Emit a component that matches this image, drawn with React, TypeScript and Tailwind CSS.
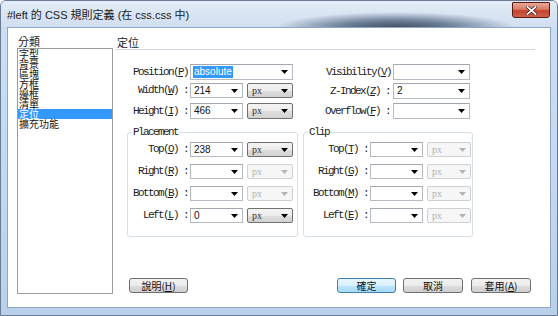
import React from "react";

const LBL =
  "font-['Liberation_Mono','Noto_Sans_CJK_TC',monospace] text-[11px] tracking-[-1.6px] text-[#1e1e1e] leading-none whitespace-nowrap";
const VAL = "font-['Liberation_Sans',sans-serif] text-[10px] leading-none text-[#111]";
const CJK = "font-['Noto_Sans_CJK_TC','Noto_Sans_CJK_SC',sans-serif]";

function Arrow({ disabled }: { disabled?: boolean }) {
  return (
    <svg width="7" height="4" viewBox="0 0 7 4" className="shrink-0">
      <path d="M0 0H7L3.5 4Z" fill={disabled ? "#b4b4b4" : "#000"} />
    </svg>
  );
}

function Combo({ className, value, sel }: { className: string; value?: string; sel?: boolean }) {
  return (
    <div
      className={
        "flex items-center justify-between border border-[#b5b9c0] border-t-[#a3a8b0] bg-white pl-[2px] pr-[4px] " +
        className
      }
    >
      <span
        className={
          sel
            ? VAL + " bg-[#3399ff] text-white px-[1px] py-[1px]"
            : VAL + " pl-[1px]"
        }
      >
        {value}
      </span>
      <Arrow />
    </div>
  );
}

function Unit({ className, disabled }: { className: string; disabled?: boolean }) {
  return (
    <div
      className={
        (disabled
          ? "border-[#d0d0d0] bg-[#f6f6f6] text-[#b0b0b0] "
          : "border-[#707070] bg-[linear-gradient(to_bottom,#f4f4f4_0%,#ececec_50%,#dedede_51%,#d2d2d2_100%)] text-[#333] ") +
        "flex items-center justify-between border rounded-[2px] pl-[4px] pr-[4px] " +
        className
      }
    >
      <span className="font-['Liberation_Serif',serif] text-[10px] leading-none">px</span>
      <Arrow disabled={disabled} />
    </div>
  );
}

function Lbl({ children, className }: { children: React.ReactNode; className: string }) {
  return <div className={LBL + " text-right " + className}>{children}</div>;
}

function Btn({ children, className, def }: { children: React.ReactNode; className: string; def?: boolean }) {
  return (
    <div
      className={
        (def
          ? "border-[#3c7fb1] bg-[linear-gradient(to_bottom,#eaf6fd_0%,#d9f0fc_50%,#bee6fd_51%,#a7d9f5_100%)] "
          : "border-[#707070] bg-[linear-gradient(to_bottom,#f2f2f2_0%,#ebebeb_50%,#dddddd_51%,#cfcfcf_100%)] ") +
        "flex items-center justify-center border rounded-[3px] h-[15px] text-[10px] leading-none text-[#111] " +
        CJK +
        " " +
        className
      }
    >
      {children}
    </div>
  );
}

const U = ({ c }: { c: string }) => <u className="underline-offset-[1px]">{c}</u>;

export default function App() {
  const items = ["字型", "背景", "區塊", "方框", "邊框", "清單", "定位", "擴充功能"];
  return (
    <div className="w-[558px] h-[316px] bg-white">
      <div className="w-[558px] h-[316px] flex flex-col rounded-t-[6px] border border-[#6a7c93] bg-[linear-gradient(to_bottom,#cddff2_0%,#c3d8ee_60%,#b9d0ea_100%)] overflow-hidden">
        {/* title bar */}
        <div className="h-[26px] flex items-start justify-between bg-[image:radial-gradient(ellipse_120px_16px_at_395px_27px,#3e4b5b_0%,#6b7e95_45%,rgba(160,185,215,0)_100%),linear-gradient(to_bottom,#e3ecf7,#d0def0)]">
          <div className={"pl-[6px] pt-[9px] text-[11px] leading-none text-[#1a1a1a] font-['Liberation_Sans','Noto_Sans_CJK_TC',sans-serif]"}>
            #left 的 CSS 規則定義 (在 css.css 中)
          </div>
          <div className="mt-[1px] mr-[7px] w-[38px] h-[16px] rounded-b-[3px] rounded-t-[1px] border border-[#5b1a10] bg-[linear-gradient(to_bottom,#e9a99a_0%,#d77a66_45%,#c2442d_55%,#d2614a_100%)] flex items-center justify-center">
            <svg width="11" height="9" viewBox="0 0 11 9">
              <path d="M1.5 1L9.5 8M9.5 1L1.5 8" stroke="#3a120b" strokeWidth="3.2" strokeLinecap="square" />
              <path d="M1.5 1L9.5 8M9.5 1L1.5 8" stroke="#fff" strokeWidth="1.8" strokeLinecap="square" />
            </svg>
          </div>
        </div>

        {/* client */}
        <div className="mx-[6px] h-[281px] border border-[#8ea6c2] bg-white flex">
          {/* left column */}
          <div className="pl-[9px] pt-[7px] flex flex-col">
            <div className={"pl-[1px] h-[13px] text-[11px] leading-[13px] text-[#1a1a1a] " + CJK}>分類</div>
            <div className="w-[96px] h-[246px] border border-[#9c9c9c] bg-white">
              {items.map((t) => (
                <div
                  key={t}
                  className={
                    "h-[10px] leading-[10px] text-[10px] pl-[1px] " +
                    CJK +
                    (t === "定位" ? " bg-[#3399ff] text-white" : " text-[#111]")
                  }
                >
                  {t}
                </div>
              ))}
            </div>
          </div>

          {/* right column */}
          <div className="pl-[2px] pt-[7px] flex flex-col">
            <div className={"pl-[2px] h-[14px] text-[11px] leading-[14px] text-[#1a1a1a] " + CJK}>定位</div>
            <div className="w-[420px] h-[2px] border-t border-[#d2d8e0] border-b border-b-white" />

            {/* top rows */}
            <div className="mt-[13px] flex">
              <div className="flex flex-col">
                <div className="flex items-center h-[16px]">
                  <Lbl className="w-[73px]">
                    Position(<U c="P" />)
                  </Lbl>
                  <Combo className="ml-[2px] w-[103px] h-[16px]" value="absolute" sel />
                </div>
                <div className="mt-[3px] flex items-center h-[15px]">
                  <Lbl className="w-[73px]">
                    Width(<U c="W" />) :
                  </Lbl>
                  <Combo className="ml-[2px] w-[53px] h-[15px]" value="214" />
                  <Unit className="ml-[4px] w-[46px] h-[15px]" />
                </div>
                <div className="mt-[5px] flex items-center h-[16px]">
                  <Lbl className="w-[73px]">
                    Height(<U c="I" />) :
                  </Lbl>
                  <Combo className="ml-[2px] w-[53px] h-[16px]" value="466" />
                  <Unit className="ml-[4px] w-[46px] h-[16px]" />
                </div>
              </div>
              <div className="flex flex-col">
                <div className="flex items-center h-[16px]">
                  <Lbl className="w-[98px]">
                    Visibility(<U c="V" />)
                  </Lbl>
                  <Combo className="ml-[2px] w-[77px] h-[16px]" />
                </div>
                <div className="mt-[3px] flex items-center h-[16px]">
                  <Lbl className="w-[97px]">
                    Z-Index(<U c="Z" />) :
                  </Lbl>
                  <Combo className="ml-[3px] w-[77px] h-[16px]" value="2" />
                </div>
                <div className="mt-[4px] flex items-center h-[16px]">
                  <Lbl className="w-[97px]">
                    Overflow(<U c="F" />) :
                  </Lbl>
                  <Combo className="ml-[3px] w-[77px] h-[16px]" />
                </div>
              </div>
            </div>

            {/* groups */}
            <div className="mt-[8px] ml-[12px] flex gap-[5px]">
              <fieldset className="w-[171px] h-[110px] border border-[#d5dfe5] rounded-[3px]">
                <legend className={LBL + " ml-[4px] px-[1px] leading-[12px]"}>Placement</legend>
                <div className="mt-[4px] flex flex-col gap-[7px]">
                  {[
                    ["Top", "O", "238", false],
                    ["Right", "R", "", true],
                    ["Bottom", "B", "", true],
                    ["Left", "L", "0", false],
                  ].map(([n, k, v, d]) => (
                    <div key={n as string} className="flex items-center h-[15px]">
                      <Lbl className="w-[60px]">
                        {n as string}(<U c={k as string} />) :
                      </Lbl>
                      <Combo className="ml-[2px] w-[53px] h-[15px]" value={v as string} />
                      <Unit className="ml-[4px] w-[46px] h-[15px]" disabled={d as boolean} />
                    </div>
                  ))}
                </div>
              </fieldset>
              <fieldset className="w-[170px] h-[110px] border border-[#d5dfe5] rounded-[3px]">
                <legend className={LBL + " ml-[4px] px-[1px] leading-[12px]"}>Clip</legend>
                <div className="mt-[4px] flex flex-col gap-[7px]">
                  {[
                    ["Top", "T"],
                    ["Right", "G"],
                    ["Bottom", "M"],
                    ["Left", "E"],
                  ].map(([n, k]) => (
                    <div key={n} className="flex items-center h-[15px]">
                      <Lbl className="w-[64px]">
                        {n}(<U c={k} />) :
                      </Lbl>
                      <Combo className="ml-[2px] w-[53px] h-[15px]" />
                      <Unit className="ml-[4px] w-[44px] h-[15px]" disabled />
                    </div>
                  ))}
                </div>
              </fieldset>
            </div>

            {/* buttons */}
            <div className="mt-[41px] ml-[14px] flex">
              <Btn className="w-[59px]">
                說明(<U c="H" />)
              </Btn>
              <Btn className="ml-[149px] w-[59px]" def>
                確定
              </Btn>
              <Btn className="ml-[7px] w-[60px]">取消</Btn>
              <Btn className="ml-[8px] w-[60px]">
                套用(<U c="A" />)
              </Btn>
            </div>
          </div>
        </div>
      </div>
    </div>
  );
}
